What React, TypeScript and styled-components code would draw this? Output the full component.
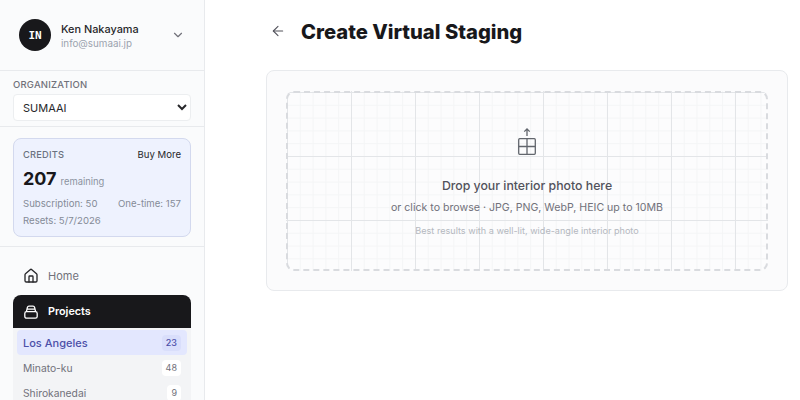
import React from "react";
import styled, { createGlobalStyle } from "styled-components";
import { ArrowLeft, ChevronDown, Home as HomeIcon } from "lucide-react";

const GlobalStyle = createGlobalStyle`
  html, body {
    margin: 0;
    height: 100%;
    overflow: hidden;
    background: #ffffff;
    font-family: "Inter", "Noto Sans", sans-serif;
  }
  * {
    box-sizing: border-box;
  }
`;

const Page = styled.div`
  display: flex;
  width: 800px;
  height: 400px;
  overflow: hidden;
`;

const Sidebar = styled.aside`
  flex: 0 0 205px;
  height: 400px;
  overflow: hidden;
  background: #fafbfc;
  border-right: 1px solid #e8eaed;
`;

const UserRow = styled.div`
  display: flex;
  align-items: center;
  height: 71px;
  padding: 0 19px;
  border-bottom: 1px solid #e8eaed;
`;

const Avatar = styled.div`
  display: flex;
  align-items: center;
  justify-content: center;
  width: 32px;
  height: 32px;
  border-radius: 50%;
  background: #18181b;
  color: #ffffff;
  font-family: "DejaVu Sans Mono", monospace;
  font-size: 11px;
  font-weight: 700;
`;

const UserInfo = styled.div`
  flex: 1;
  margin-left: 10px;
  padding-top: 2px;
`;

const UserName = styled.div`
  font-size: 10.9px;
  font-weight: 500;
  line-height: 15px;
  color: #27272a;
`;

const UserMail = styled.div`
  font-size: 9.8px;
  line-height: 14px;
  color: #9ca3af;
`;

const ChevronSlot = styled.div`
  display: flex;
  color: #71717a;
`;

const OrgSection = styled.div`
  height: 56px;
  padding: 7px 13px 0;
  border-bottom: 1px solid #e8eaed;
`;

const SectionLabel = styled.div`
  font-size: 9.5px;
  line-height: 13px;
  letter-spacing: 0.2px;
  color: #71717a;
  font-weight: 500;
`;

const OrgSelect = styled.select`
  display: block;
  width: 178px;
  height: 27px;
  margin-top: 3px;
  padding: 0 5px;
  border: 1px solid #eceef0;
  border-radius: 4px;
  background: #ffffff;
  color: #27272a;
  font-family: "Inter", sans-serif;
  font-size: 11px;
`;

const CreditsSection = styled.div`
  height: 120px;
  padding: 11px 13px 0;
  border-bottom: 1px solid #e8eaed;
`;

const CreditsCard = styled.div`
  height: 99px;
  padding: 8px 9px;
  border: 1px solid #d3d9ee;
  border-radius: 8px;
  background: #eef2fe;
`;

const CreditsTop = styled.div`
  display: flex;
  justify-content: space-between;
  align-items: center;
  height: 14px;
`;

const CreditsLabel = styled.span`
  font-size: 9.3px;
  letter-spacing: 0.2px;
  color: #6b7280;
  font-weight: 500;
`;

const BuyMore = styled.span`
  font-size: 9.6px;
  color: #27272a;
`;

const Balance = styled.div`
  display: flex;
  align-items: baseline;
  gap: 4px;
  margin-top: 7px;
  height: 24px;
`;

const BalanceValue = styled.span`
  font-size: 18px;
  font-weight: 700;
  color: #18181b;
`;

const BalanceNote = styled.span`
  font-size: 9.4px;
  color: #8b929e;
`;

const CreditsRow = styled.div<{ $top: number }>`
  display: flex;
  justify-content: space-between;
  font-size: 9.6px;
  line-height: 17px;
  color: #858b97;
  margin-top: ${(p) => p.$top}px;
`;

const Nav = styled.nav`
  padding: 13px 13px 0;
`;

const HomeLink = styled.div`
  display: flex;
  align-items: center;
  gap: 9px;
  height: 32px;
  padding-left: 10px;
  font-size: 11px;
  color: #71717a;
`;

const HomeGlyph = styled.span`
  display: flex;
  color: #27272a;
`;

const ProjectsHead = styled.div`
  display: flex;
  align-items: center;
  gap: 10px;
  height: 33px;
  margin-top: 3px;
  padding-left: 11px;
  border-radius: 8px 8px 0 0;
  background: #18181b;
  color: #ffffff;
  font-size: 10.8px;
  font-weight: 600;
`;

const ProjectList = styled.div`
  padding: 2px 4px 0;
  background: #f3f4f6;
`;

const ProjectRow = styled.div<{ $active?: boolean }>`
  display: flex;
  align-items: center;
  justify-content: space-between;
  height: 25px;
  padding: 0 6px;
  border-radius: 4px;
  background: ${(p) => (p.$active ? "#e3e7fe" : "transparent")};
  color: ${(p) => (p.$active ? "#4c4fa8" : "#71717a")};
  font-size: ${(p) => (p.$active ? "11px" : "10.3px")};
  font-weight: ${(p) => (p.$active ? 500 : 400)};
`;

const Count = styled.span<{ $active?: boolean }>`
  min-width: 11px;
  padding: 2px 4px;
  border-radius: 4px;
  background: ${(p) => (p.$active ? "#d9defb" : "#ffffff")};
  color: ${(p) => (p.$active ? "#4c4fa8" : "#71717a")};
  font-size: 9px;
  line-height: 12px;
  text-align: center;
`;

const Main = styled.main`
  flex: 1;
  padding: 13px 12px 0 61px;
`;

const TitleRow = styled.div`
  display: flex;
  align-items: center;
  height: 36px;
`;

const BackButton = styled.div`
  display: flex;
  margin-left: 4px;
  width: 31px;
  color: #52525b;
`;

const Title = styled.h1`
  margin: 0;
  font-family: "Inter", sans-serif;
  font-size: 20.2px;
  font-weight: 800;
  color: #18181b;
`;

const UploadCard = styled.section`
  height: 221px;
  margin-top: 21px;
  padding: 20px 19px;
  border: 1px solid #e8eaed;
  border-radius: 8px;
  background: #fbfbfc;
`;

const DropZone = styled.div`
  display: flex;
  flex-direction: column;
  align-items: center;
  height: 180px;
  padding-top: 34px;
  border: 2px dashed #d9dbdf;
  border-radius: 8px;
  background-color: #fcfcfd;
  background-image:
    linear-gradient(to right, #e3e5e8 1px, transparent 1px),
    linear-gradient(to bottom, #e3e5e8 1px, transparent 1px),
    linear-gradient(to right, #f4f5f6 1px, transparent 1px),
    linear-gradient(to bottom, #f4f5f6 1px, transparent 1px);
  background-size: 64px 64px, 64px 64px, 12.8px 12.8px, 12.8px 12.8px;
  background-position: -1px -1px;
`;

const DropIcon = styled.svg`
  display: block;
  color: #62666d;
`;

const DropTitle = styled.div`
  margin-top: 23px;
  font-size: 12.3px;
  line-height: 16px;
  font-weight: 500;
  color: #52525b;
`;

const DropHint = styled.div`
  margin-top: 6px;
  font-size: 10.6px;
  line-height: 16px;
  color: #71717a;
`;

const DropNote = styled.div`
  margin-top: 7px;
  font-size: 9.1px;
  line-height: 16px;
  color: #b4b8bf;
`;

const projects = [
  { name: "Los Angeles", count: 23, active: true },
  { name: "Minato-ku", count: 48 },
  { name: "Shirokanedai", count: 9 },
];

const App: React.FC = () => {
  return (
    <Page>
      <GlobalStyle />
      <Sidebar>
        <UserRow>
          <Avatar>IN</Avatar>
          <UserInfo>
            <UserName>Ken Nakayama</UserName>
            <UserMail>info@sumaai.jp</UserMail>
          </UserInfo>
          <ChevronSlot>
            <ChevronDown size={14} />
          </ChevronSlot>
        </UserRow>
        <OrgSection>
          <SectionLabel>ORGANIZATION</SectionLabel>
          <OrgSelect defaultValue="SUMAAI">
            <option>SUMAAI</option>
          </OrgSelect>
        </OrgSection>
        <CreditsSection>
          <CreditsCard>
            <CreditsTop>
              <CreditsLabel>CREDITS</CreditsLabel>
              <BuyMore>Buy More</BuyMore>
            </CreditsTop>
            <Balance>
              <BalanceValue>207</BalanceValue>
              <BalanceNote>remaining</BalanceNote>
            </Balance>
            <CreditsRow $top={3}>
              <span>Subscription: 50</span>
              <span>One-time: 157</span>
            </CreditsRow>
            <CreditsRow $top={0}>
              <span>Resets: 5/7/2026</span>
            </CreditsRow>
          </CreditsCard>
        </CreditsSection>
        <Nav>
          <HomeLink>
            <HomeGlyph>
              <HomeIcon size={16} strokeWidth={2} />
            </HomeGlyph>
            Home
          </HomeLink>
          <ProjectsHead>
            <svg width="14" height="14" viewBox="0 0 14 14" fill="none" stroke="currentColor" strokeWidth="1.3">
              <rect x="0.8" y="6.6" width="12.4" height="6.6" rx="1.8" />
              <path d="M2.4 6.6 L3.4 2.4 Q3.7 1.2 5 1.2 H9 Q10.3 1.2 10.6 2.4 L11.6 6.6 M3 4.2 H11" />
            </svg>
            Projects
          </ProjectsHead>
          <ProjectList>
            {projects.map((project) => (
              <ProjectRow key={project.name} $active={project.active}>
                {project.name}
                <Count $active={project.active}>{project.count}</Count>
              </ProjectRow>
            ))}
          </ProjectList>
        </Nav>
      </Sidebar>
      <Main>
        <TitleRow>
          <BackButton>
            <ArrowLeft size={16} strokeWidth={1.6} />
          </BackButton>
          <Title>Create Virtual Staging</Title>
        </TitleRow>
        <UploadCard>
          <DropZone>
            <DropIcon width="20" height="28" viewBox="0 0 20 28" fill="none" stroke="currentColor" strokeWidth="1.3">
              <path d="M10 9 V2 M7.3 4.6 L10 1.9 L12.7 4.6" />
              <rect x="1.7" y="11.7" width="16.6" height="15.6" rx="1" />
              <path d="M10 11.7 V27.3 M1.7 19.5 H18.3" />
            </DropIcon>
            <DropTitle>Drop your interior photo here</DropTitle>
            <DropHint>or click to browse · JPG, PNG, WebP, HEIC up to 10MB</DropHint>
            <DropNote>Best results with a well-lit, wide-angle interior photo</DropNote>
          </DropZone>
        </UploadCard>
      </Main>
    </Page>
  );
};

export default App;
